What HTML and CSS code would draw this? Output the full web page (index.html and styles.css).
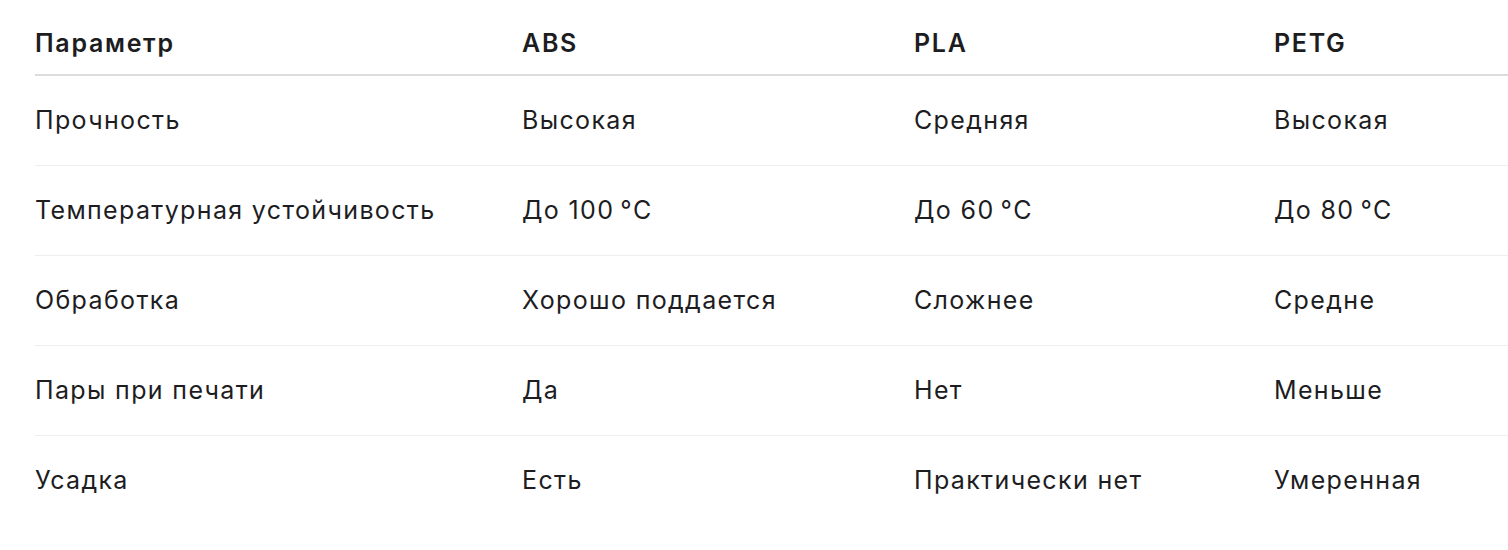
FILE: index.html
```html
<!DOCTYPE html>
<html lang="ru">
<head>
<meta charset="utf-8">
<link rel="stylesheet" href="styles.css">
</head>
<body>
<div class="wrap">
<table class="cmp">
<colgroup><col class="c1"><col class="c2"><col class="c3"><col class="c4"></colgroup>
<thead>
<tr><th>Параметр</th><th>ABS</th><th>PLA</th><th>PETG</th></tr>
</thead>
<tbody>
<tr><td>Прочность</td><td>Высокая</td><td>Средняя</td><td>Высокая</td></tr>
<tr><td>Температурная устойчивость</td><td>До 100&#8201;°C</td><td>До 60&#8201;°C</td><td>До 80&#8201;°C</td></tr>
<tr><td>Обработка</td><td>Хорошо поддается</td><td>Сложнее</td><td>Средне</td></tr>
<tr><td>Пары при печати</td><td>Да</td><td>Нет</td><td>Меньше</td></tr>
<tr><td>Усадка</td><td>Есть</td><td>Практически нет</td><td>Умеренная</td></tr>
</tbody>
</table>
</div>
</body>
</html>
```
FILE: styles.css
```css
html, body { margin: 0; padding: 0; background: #fff; overflow: hidden; }
.wrap { padding: 12px 0 0 35px; }
.cmp {
  border-collapse: collapse;
  table-layout: fixed;
  width: 1473px;
  font-family: Inter, "Noto Sans", sans-serif;
  font-size: 25px;
  color: #1d1d1f;
}
.c1 { width: 487px; }
.c2 { width: 392px; }
.c3 { width: 360px; }
.c4 { width: 234px; }
.cmp th {
  text-align: left;
  font-weight: 600;
  letter-spacing: 1.7px;
  padding: 16px 0;
  line-height: 30px;
  border-bottom: 2px solid #dcdcdc;
}
.cmp td {
  padding: 30px 0;
  line-height: 29px;
  letter-spacing: 1.35px;
  border-bottom: 1px solid #eeeeee;
}
.cmp tbody tr:last-child td { border-bottom: none; }
```
